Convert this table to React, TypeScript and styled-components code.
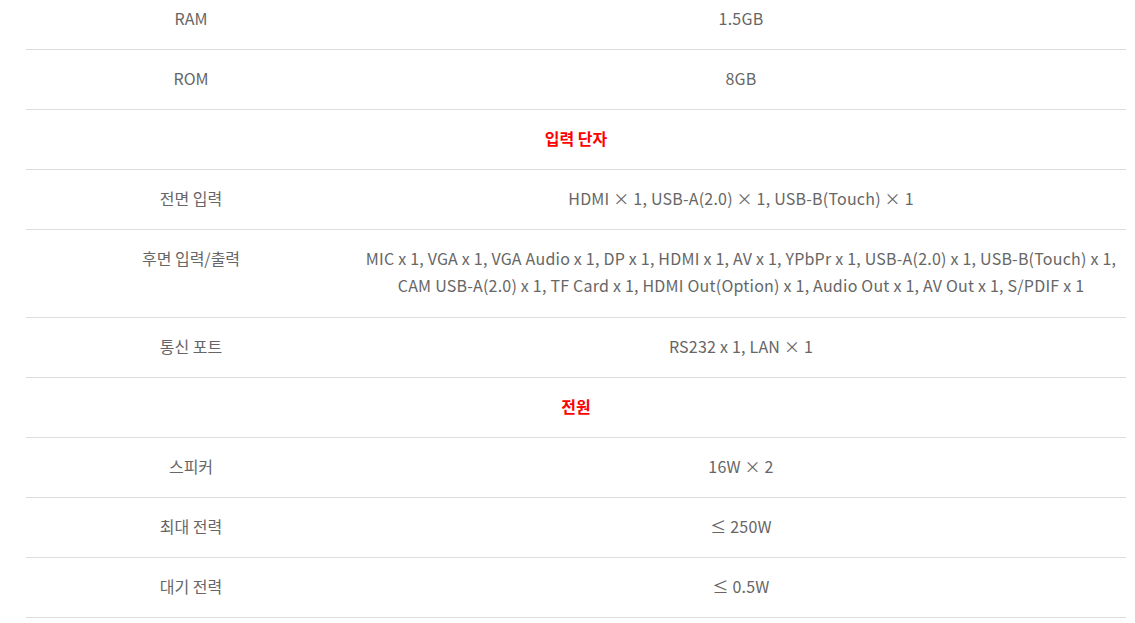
import React from "react";
import styled, { createGlobalStyle } from "styled-components";

const Global = createGlobalStyle`
  html, body { margin: 0; padding: 0; background: #fff; }
  body { font-family: "Noto Sans CJK KR", "Noto Sans", sans-serif; overflow: hidden; }
`;

const Wrap = styled.div`
  padding: 0 9px 0 26px;
  margin-top: -10px;
`;

const SpecTable = styled.table`
  width: 1100px;
  border-collapse: collapse;
  table-layout: fixed;
  font-size: 16px;
  color: #666;
`;

const Row = styled.tr``;

const Cell = styled.td<{ $w?: string }>`
  width: ${(p) => p.$w || "auto"};
  padding: 15px 0 17px;
  line-height: 27px;
  text-align: center;
  vertical-align: top;
  border-bottom: 1px solid #dddddd;
`;

const ValueCell = styled(Cell)<{ $multi?: boolean }>`
  padding-bottom: ${(p) => (p.$multi ? "18px" : "17px")};
  letter-spacing: 0.22px;
`;

const Section = styled.td`
  padding: 15px 0 17px;
  line-height: 27px;
  text-align: center;
  font-weight: 700;
  color: #ff0000;
  border-bottom: 1px solid #dddddd;
`;

type Item =
  | { kind: "row"; label: string; value: React.ReactNode; multi?: boolean }
  | { kind: "section"; title: string };

const items: Item[] = [
  { kind: "row", label: "RAM", value: "1.5GB" },
  { kind: "row", label: "ROM", value: "8GB" },
  { kind: "section", title: "입력 단자" },
  { kind: "row", label: "전면 입력", value: "HDMI × 1, USB-A(2.0) × 1, USB-B(Touch) × 1" },
  {
    kind: "row",
    label: "후면 입력/출력",
    multi: true,
    value: (
      <>
        MIC x 1, VGA x 1, VGA Audio x 1, DP x 1, HDMI x 1, AV x 1, YPbPr x 1, USB-A(2.0) x 1, USB-B(Touch) x 1,
        <br />
        CAM USB-A(2.0) x 1, TF Card x 1, HDMI Out(Option) x 1, Audio Out x 1, AV Out x 1, S/PDIF x 1
      </>
    ),
  },
  { kind: "row", label: "통신 포트", value: "RS232 x 1, LAN × 1" },
  { kind: "section", title: "전원" },
  { kind: "row", label: "스피커", value: "16W × 2" },
  { kind: "row", label: "최대 전력", value: "≤ 250W" },
  { kind: "row", label: "대기 전력", value: "≤ 0.5W" },
];

export default function App() {
  return (
    <>
      <Global />
      <Wrap>
        <SpecTable>
          <tbody>
            {items.map((it, i) =>
              it.kind === "section" ? (
                <Row key={i}>
                  <Section colSpan={2}>{it.title}</Section>
                </Row>
              ) : (
                <Row key={i}>
                  <Cell $w="330px">{it.label}</Cell>
                  <ValueCell $w="770px" $multi={it.multi}>
                    {it.value}
                  </ValueCell>
                </Row>
              )
            )}
          </tbody>
        </SpecTable>
      </Wrap>
    </>
  );
}
